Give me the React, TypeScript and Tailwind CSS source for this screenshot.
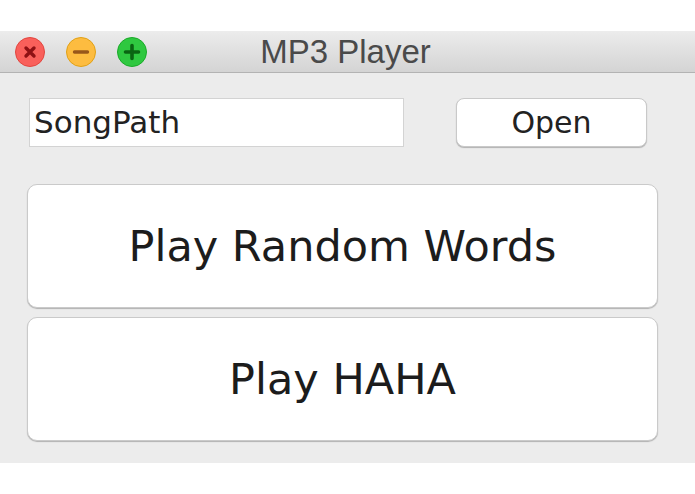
export default function App() {
  return (
    <div className="w-[695px] h-[494px] bg-white flex flex-col font-['DejaVu_Sans',sans-serif]">
      <div className="h-[31px] shrink-0" />
      {/* title bar */}
      <div className="h-[42px] shrink-0 grid grid-cols-[1fr_auto_1fr] items-center bg-gradient-to-b from-[#ececec] to-[#d4d4d4] border-b border-[#b3b3b3]">
        <div className="flex items-center gap-[21px] pl-[15px]">
          <span className="w-[30px] h-[30px] rounded-full bg-[#f9605b] border border-[#e2463f] flex items-center justify-center">
            <svg width="14" height="14" viewBox="0 0 14 14">
              <path d="M3 3L11 11M11 3L3 11" stroke="#8f1114" strokeWidth="3.4" strokeLinecap="round" />
            </svg>
          </span>
          <span className="w-[30px] h-[30px] rounded-full bg-[#fdbc40] border border-[#e1a116] flex items-center justify-center">
            <svg width="18" height="14" viewBox="0 0 18 14">
              <path d="M2.5 7H15.5" stroke="#98571a" strokeWidth="3.4" strokeLinecap="round" />
            </svg>
          </span>
          <span className="w-[30px] h-[30px] rounded-full bg-[#2fc840] border border-[#1aab29] flex items-center justify-center">
            <svg width="18" height="18" viewBox="0 0 18 18">
              <path d="M9 2.5V15.5M2.5 9H15.5" stroke="#0a6512" strokeWidth="3.6" strokeLinecap="round" />
            </svg>
          </span>
        </div>
        <div className="text-[33px] leading-none text-[#4a4a4a] font-['Liberation_Sans',sans-serif] pr-[4px]">
          MP3 Player
        </div>
        <div />
      </div>
      {/* content */}
      <div className="h-[390px] shrink-0 bg-[#ececec] pt-[25px] pl-[27px] pr-[37px]">
        <div className="flex items-center">
          <div className="ml-[2px] w-[375px] h-[49px] bg-white border border-[#d3d3d3] flex items-center pl-[4px] text-[31px] text-[#222]">
            SongPath
          </div>
          <button className="ml-[52px] w-[191px] h-[49px] bg-white rounded-[8px] border border-[#c9c9c9] shadow-[0_1px_1px_rgba(0,0,0,0.25)] text-[30px] text-[#222] flex items-center justify-center">
            Open
          </button>
        </div>
        <div className="mt-[37px] flex flex-col gap-[9px]">
          <button className="w-[631px] h-[124px] bg-white rounded-[10px] border border-[#cacaca] shadow-[0_1px_1px_rgba(0,0,0,0.25)] text-[43px] text-[#1c1c1c] flex items-center justify-center">
            Play Random Words
          </button>
          <button className="w-[631px] h-[124px] bg-white rounded-[10px] border border-[#cacaca] shadow-[0_1px_1px_rgba(0,0,0,0.25)] text-[43px] text-[#1c1c1c] flex items-center justify-center">
            Play HAHA
          </button>
        </div>
      </div>
    </div>
  );
}
